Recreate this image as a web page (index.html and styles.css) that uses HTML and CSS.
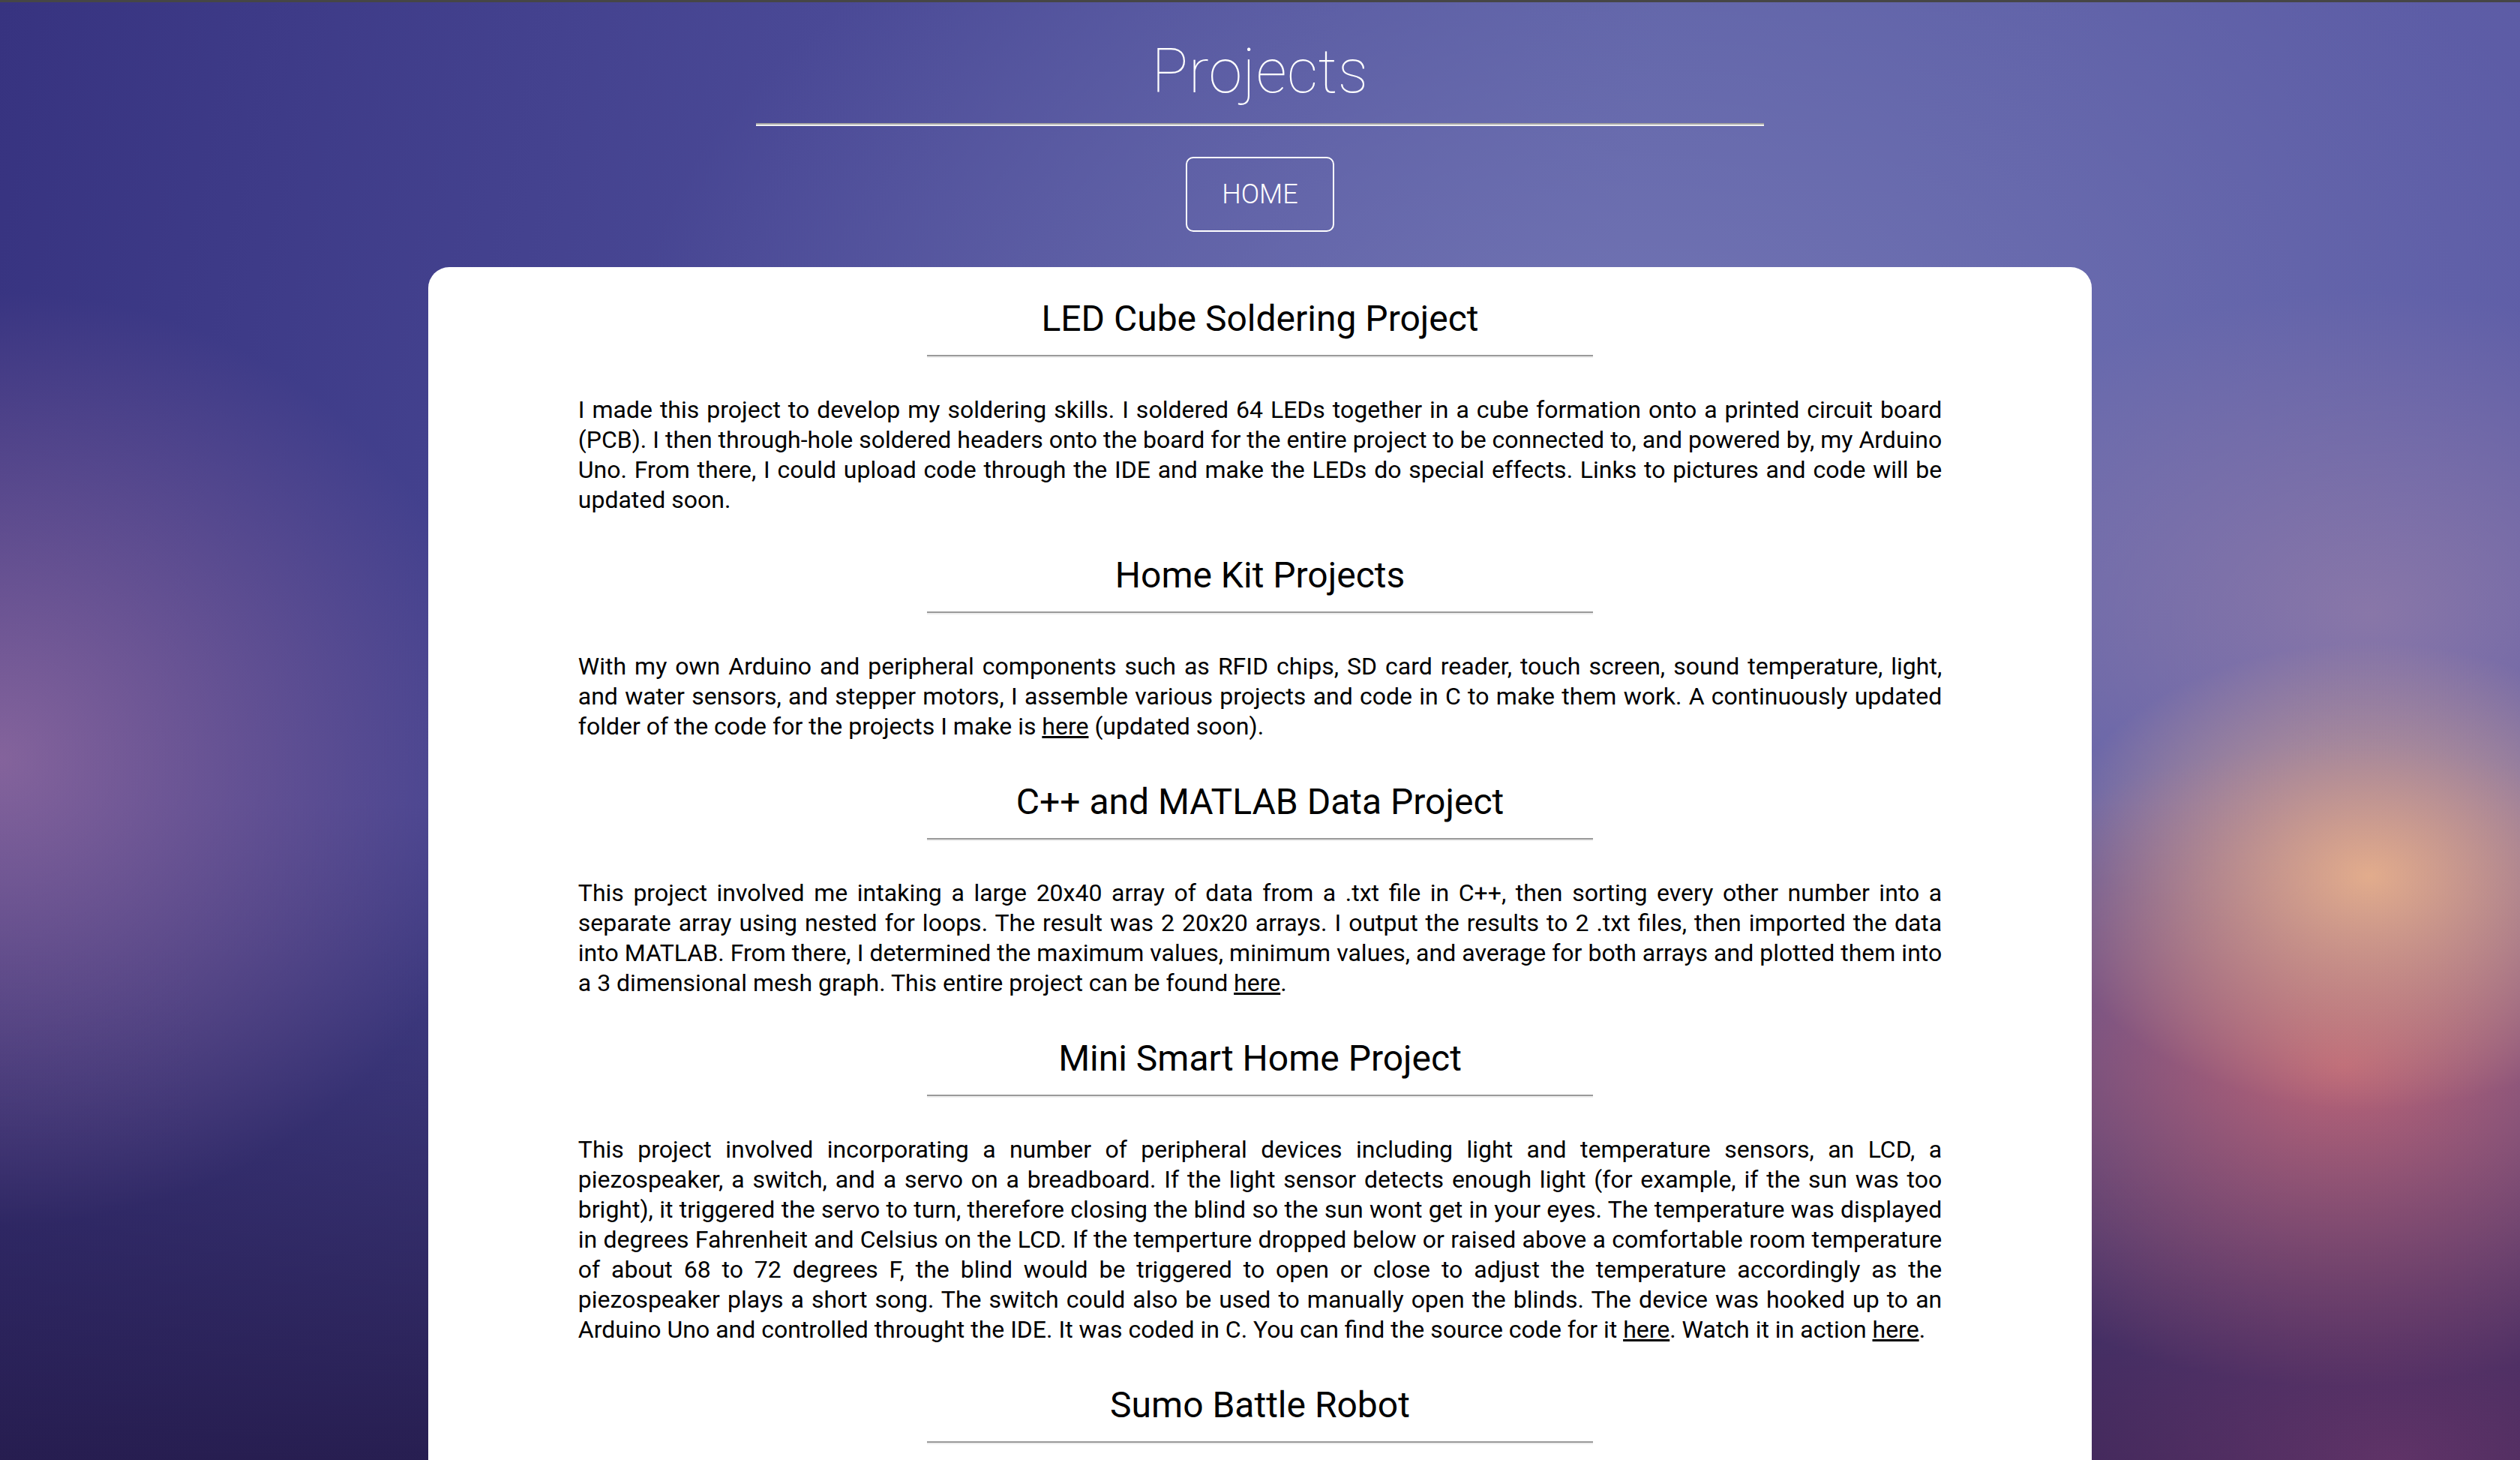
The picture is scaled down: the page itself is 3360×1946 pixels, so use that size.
FILE: index.html
```html
<!DOCTYPE html>
<html lang="en">
<head>
<meta charset="utf-8">
<title>Projects</title>
<link rel="stylesheet" href="styles.css">
</head>
<body>
<div class="topbar"></div>
<header class="header">
  <h1 class="title">Projects</h1>
  <hr class="title-rule">
  <a class="home-btn" href="#">HOME</a>
</header>
<main class="card">
  <section class="project">
    <h2 class="project-title">LED Cube Soldering Project</h2>
    <hr class="project-rule">
    <p class="project-text">I made this project to develop my soldering skills. I soldered 64 LEDs together in a cube formation onto a printed circuit board (PCB). I then through-hole soldered headers onto the board for the entire project to be connected to, and powered by, my Arduino Uno. From there, I could upload code through the IDE and make the LEDs do special effects. Links to pictures and code will be updated soon.</p>
  </section>
  <section class="project">
    <h2 class="project-title">Home Kit Projects</h2>
    <hr class="project-rule">
    <p class="project-text">With my own Arduino and peripheral components such as RFID chips, SD card reader, touch screen, sound temperature, light, and water sensors, and stepper motors, I assemble various projects and code in C to make them work. A continuously updated folder of the code for the projects I make is <a href="#">here</a> (updated soon).</p>
  </section>
  <section class="project">
    <h2 class="project-title">C++ and MATLAB Data Project</h2>
    <hr class="project-rule">
    <p class="project-text">This project involved me intaking a large 20x40 array of data from a .txt file in C++, then sorting every other number into a separate array using nested for loops. The result was 2 20x20 arrays. I output the results to 2 .txt files, then imported the data into MATLAB. From there, I determined the maximum values, minimum values, and average for both arrays and plotted them into a 3 dimensional mesh graph. This entire project can be found <a href="#">here</a>.</p>
  </section>
  <section class="project">
    <h2 class="project-title">Mini Smart Home Project</h2>
    <hr class="project-rule">
    <p class="project-text">This project involved incorporating a number of peripheral devices including light and temperature sensors, an LCD, a piezospeaker, a switch, and a servo on a breadboard. If the light sensor detects enough light (for example, if the sun was too bright), it triggered the servo to turn, therefore closing the blind so the sun wont get in your eyes. The temperature was displayed in degrees Fahrenheit and Celsius on the LCD. If the temperture dropped below or raised above a comfortable room temperature of about 68 to 72 degrees F, the blind would be triggered to open or close to adjust the temperature accordingly as the piezospeaker plays a short song. The switch could also be used to manually open the blinds. The device was hooked up to an Arduino Uno and controlled throught the IDE. It was coded in C. You can find the source code for it <a href="#">here</a>. Watch it in action <a href="#">here</a>.</p>
  </section>
  <section class="project">
    <h2 class="project-title">Sumo Battle Robot</h2>
    <hr class="project-rule">
  </section>
</main>
</body>
</html>
```
FILE: styles.css
```css
html, body {
  margin: 0;
  padding: 0;
}

body {
  font-family: Roboto, "Liberation Sans", sans-serif;
  color: #000;
  min-height: 100vh;
  background-color: #4b4a94;
  background-image:
    radial-gradient(ellipse 13% 16% at 94% 60%, rgba(226, 172, 140, 1), rgba(226, 172, 140, 0) 100%),
    radial-gradient(ellipse 19% 22% at 93% 73%, rgba(198, 102, 116, 0.9), rgba(198, 102, 116, 0) 100%),
    radial-gradient(ellipse 19% 22% at 94% 42%, rgba(150, 126, 168, 0.75), rgba(150, 126, 168, 0) 100%),
    radial-gradient(ellipse 24% 24% at 95% 100%, rgba(98, 52, 104, 0.95), rgba(98, 52, 104, 0) 100%),
    radial-gradient(ellipse 20% 32% at 0% 52%, rgba(140, 104, 158, 0.9), rgba(140, 104, 158, 0) 100%),
    linear-gradient(to bottom, rgba(36, 26, 74, 0) 55%, rgba(36, 26, 74, 0.9) 100%),
    radial-gradient(ellipse 40% 40% at 65% 25%, rgba(118, 120, 182, 0.8), rgba(118, 120, 182, 0) 100%),
    linear-gradient(100deg, #373380 0%, #4a4996 30%, #5c60a6 60%, #5d5ba6 100%);
  background-attachment: fixed;
}

.topbar {
  height: 3px;
  background: #464646;
}

.header {
  display: flex;
  flex-direction: column;
  align-items: center;
  padding-top: 48px;
}

.title {
  margin: 0;
  font-size: 81px;
  font-weight: 100;
  line-height: 89px;
  color: #fff;
  letter-spacing: 0.5px;
}

.title-rule {
  width: 40%;
  margin: 24px 0 41px;
  border: 0;
  border-top: 2px solid #a4a4a4;
  border-bottom: 2px solid #f2f2f2;
  height: 0;
}

.home-btn {
  display: block;
  box-sizing: border-box;
  width: 198px;
  height: 100px;
  border: 2px solid #fff;
  border-radius: 10px;
  color: #fff;
  font-size: 36px;
  font-weight: 300;
  line-height: 96px;
  text-align: center;
  text-decoration: none;
}

.card {
  width: 66%;
  margin: 47px auto 0;
  padding: 41px 0 80px;
  background: #fff;
  border-radius: 28px 28px 0 0;
}

.project-title {
  margin: 0;
  font-size: 48px;
  font-weight: 400;
  line-height: 56px;
  text-align: center;
}

.project-rule {
  width: 40%;
  margin: 20px auto 49px;
  border: 0;
  border-top: 2px solid #9a9a9a;
  border-bottom: 2px solid #eeeeee;
  height: 0;
}

.project-text {
  margin: 0 9% 53px;
  font-size: 32px;
  line-height: 40px;
  text-align: justify;
}

.project-text a {
  color: #000;
  text-decoration: underline;
}
```
